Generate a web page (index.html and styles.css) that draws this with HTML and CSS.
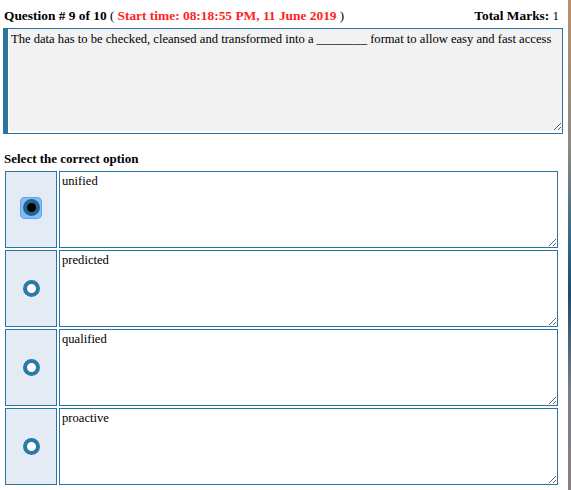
FILE: index.html
```html
<!DOCTYPE html>
<html lang="en">
<head>
  <meta charset="UTF-8" />
  <title>Quiz - Question 9</title>
  <link rel="stylesheet" href="styles.css">
</head>
<body>
  <div class="screen">
    <div class="page">
      <div class="q-head">
        <span class="q-title"><b>Question # 9 of 10</b> ( <span class="start">Start time: 08:18:55 PM, 11 June 2019</span> )</span>
        <span class="marks"><b>Total Marks:</b> 1</span>
      </div>

      <div class="q-box">
        <textarea class="q-text" readonly>The data has to be checked, cleansed and transformed into a ________ format to allow easy and fast access</textarea>
      </div>

      <h3 class="opt-title">Select the correct option</h3>

      <div class="options">
        <div class="opt">
          <div class="opt-radio"><span class="radio-focus"><span class="radio checked"></span></span></div>
          <textarea class="opt-text" readonly>unified</textarea>
        </div>
        <div class="opt">
          <div class="opt-radio"><span class="radio"></span></div>
          <textarea class="opt-text" readonly>predicted</textarea>
        </div>
        <div class="opt">
          <div class="opt-radio"><span class="radio"></span></div>
          <textarea class="opt-text" readonly>qualified</textarea>
        </div>
        <div class="opt">
          <div class="opt-radio"><span class="radio"></span></div>
          <textarea class="opt-text" readonly>proactive</textarea>
        </div>
      </div>
    </div>
    <div class="edge"></div>
  </div>
</body>
</html>
```

FILE: styles.css
```css
body {
  margin: 0;
  padding: 0;
  background: #ffffff;
  font-family: "Liberation Serif", "Times New Roman", serif;
  font-size: 12.6px;
  color: #000;
}

.screen {
  display: grid;
  grid-template-columns: 1fr 3px;
  height: 490px;
  overflow: hidden;
}

.page {
  padding: 0 5px 0 3px;
}

.edge {
  background: linear-gradient(180deg, #b9906a 0%, #8f8a80 30%, #2f6787 50%, #1d4a68 60%, #7a7f8a 80%, #8a7f80 100%);
}

.q-head {
  display: flex;
  justify-content: space-between;
  padding: 8px 4px 0 1px;
  height: 20px;
  font-size: 13px;
}

.q-head b,
.start {
  font-size: 13.4px;
}

.start {
  color: #ff1e1e;
  font-weight: bold;
}

.q-box {
  border: 1px solid #2b74a0;
  border-left: 5px solid #2b74a0;
  background: #fff;
  padding: 0 0 2px 1px;
}

.q-text {
  display: block;
  width: 100%;
  height: 102px;
  box-sizing: border-box;
  margin: 0;
  border: none;
  background: #f2f2f2;
  padding: 3px 2px;
  font-family: inherit;
  font-size: 12.6px;
  resize: vertical;
  outline: none;
}

.opt-title {
  margin: 17px 0 4px 1px;
  font-size: 13px;
  font-weight: bold;
}

.options {
  display: flex;
  flex-direction: column;
  gap: 2px;
  padding-left: 2px;
  width: 553px;
}

.opt {
  display: flex;
  gap: 2px;
  height: 77px;
}

.opt-radio {
  width: 50px;
  border: 1px solid #2b74a0;
  background: #e4ebf5;
  display: flex;
  align-items: center;
  justify-content: center;
}

.radio {
  width: 9px;
  height: 9px;
  border: 4px solid #2a7aa8;
  border-radius: 50%;
  background: #fff;
}

.radio-focus {
  width: 22px;
  height: 22px;
  margin-top: -4px;
  border-radius: 5px;
  background: #84bdf6;
  box-shadow: inset 0 0 0 1px #5ea6f0;
  display: flex;
  align-items: center;
  justify-content: center;
}

.radio.checked {
  width: 9px;
  height: 9px;
  border: 4px solid #25628c;
  background: #000;
}

.opt-text {
  flex: 1;
  margin: 0;
  border: 1px solid #2b74a0;
  background: #fff;
  padding: 2px 2px;
  font-family: inherit;
  font-size: 12.6px;
  resize: vertical;
  outline: none;
}
```
